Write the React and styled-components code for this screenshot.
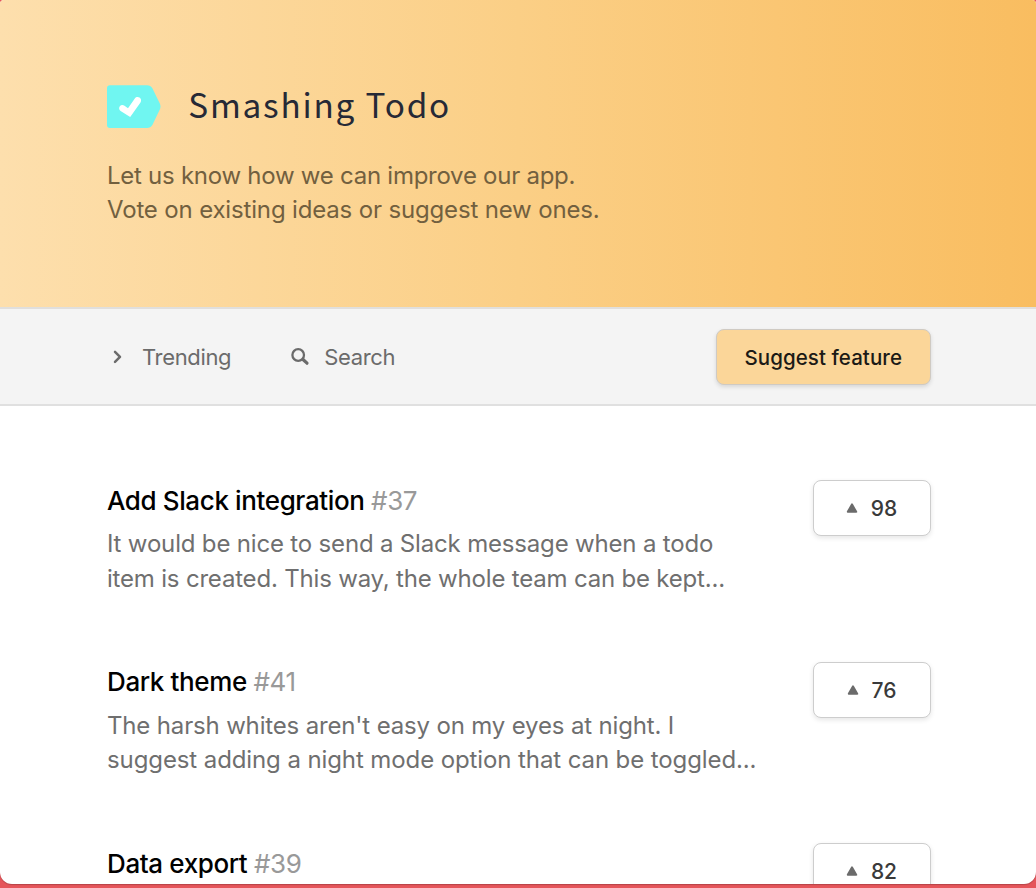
import React from 'react';
import styled, { createGlobalStyle } from 'styled-components';

const Global = createGlobalStyle`
  * { box-sizing: border-box; }
  body { margin: 0; background: #e5555a; font-family: Inter, "Liberation Sans", sans-serif; -webkit-font-smoothing: antialiased; }
  h1, h2, p { margin: 0; font-weight: 400; }
  button { font-family: inherit; margin: 0; padding: 0; }
`;

const Page = styled.div`
  height: 888px;
  overflow: hidden;
  background: #e5555a;
`;
const Card = styled.main`
  height: 884px;
  overflow: hidden;
  border-radius: 4px 4px 12px 12px;
  background: #fff;
  box-shadow: 0 1px 1px rgba(0, 0, 0, 0.2);
`;
const Hero = styled.header`
  height: 307px;
  padding: 85px 107px 0;
  background: linear-gradient(90deg, #fddfad 0%, #fbcf86 50%, #f9bd60 100%);
`;
const Brand = styled.div`
  display: flex;
  align-items: center;
  height: 43px;
  gap: 27.3px;
`;
const Logo = styled.svg`
  display: block;
  flex: none;
`;
const Wordmark = styled.h1`
  height: 43px;
  font-family: "Noto Sans CJK SC", "Noto Sans", sans-serif;
  font-size: 33.3px;
  line-height: 37px;
  letter-spacing: 1.8px;
  color: #262936;
  white-space: nowrap;
`;
const Intro = styled.p`
  margin-top: 31px;
  font-size: 24px;
  line-height: 34.4px;
  color: #72603f;
  white-space: nowrap;
`;
const Line = styled.span`
  display: block;
  letter-spacing: ${(p) => p.$track || '0'};
`;
const Toolbar = styled.nav`
  display: flex;
  align-items: center;
  height: 99px;
  padding: 0 105.5px 0 107px;
  background: #f4f4f4;
  border-top: 2px solid #e0dfdd;
  border-bottom: 2px solid #e0e0e0;
`;
const Tool = styled.button`
  display: flex;
  align-items: center;
  gap: ${(p) => p.$gap};
  margin-right: ${(p) => p.$after || '0'};
  border: 0;
  background: none;
  color: #6b6b6b;
  font-size: 22px;
  line-height: 30px;
  letter-spacing: -0.35px;
`;
const Glyph = styled.svg`
  display: block;
  flex: none;
`;
const Suggest = styled.button`
  width: 214.5px;
  height: 56px;
  margin-left: auto;
  padding-top: 1px;
  border: 1px solid #cfcac3;
  border-radius: 8px;
  background: #fbd699;
  box-shadow: 0 2px 4px rgba(0, 0, 0, 0.12);
  color: #1c1a16;
  font-size: 20.5px;
  font-weight: 500;
  letter-spacing: 0.07px;
`;
const Ideas = styled.section`
  display: flex;
  flex-direction: column;
  padding: 74px 105.5px 0 107px;
`;
const Idea = styled.article`
  display: flex;
  justify-content: space-between;
  align-items: flex-start;
  height: 181.5px;
`;
const Title = styled.h2`
  margin-top: 2.9px;
  font-size: 26px;
  line-height: 36px;
  font-weight: 500;
  letter-spacing: -0.38px;
  color: #000;
  white-space: nowrap;
`;
const Ref = styled.span`
  font-weight: 400;
  color: #999;
`;
const Summary = styled.p`
  margin-top: 8.2px;
  font-size: 24px;
  line-height: 34.5px;
  color: #6f6f6f;
  white-space: nowrap;
`;
const Vote = styled.button`
  display: flex;
  align-items: center;
  justify-content: center;
  gap: 13px;
  width: 118px;
  height: 56px;
  border: 1px solid #cdcdcd;
  border-radius: 8px;
  background: #fff;
  box-shadow: 0 2px 5px rgba(0, 0, 0, 0.1);
  color: #3a3a3a;
  font-size: 21px;
  line-height: 26px;
  font-weight: 500;
`;
const Count = styled.span`
  padding-top: 2px;
`;

const ideas = [
  {
    id: 37, title: 'Add Slack integration', votes: 98,
    lines: [
      ['It would be nice to send a Slack message when a todo', '-0.175px'],
      ['item is created. This way, the whole team can be kept...', '-0.19px'],
    ],
  },
  {
    id: 41, title: 'Dark theme', votes: 76,
    lines: [
      ["The harsh whites aren't easy on my eyes at night. I", '-0.16px'],
      ['suggest adding a night mode option that can be toggled...', '-0.1px'],
    ],
  },
  { id: 39, title: 'Data export', votes: 82, lines: [] },
];

export default function App() {
  return (
    <Page>
      <Global />
      <Card>
        <Hero>
          <Brand>
            <Logo width="54" height="43" viewBox="0 0 54 43">
              <path d="M3 0.300H40Q43.500 0.300 45.500 3.500L52.800 18.500Q54.200 21.500 52.800 24.500L45.500 39.700Q43.500 43 40 43H3Q0 43 0 40V3.300Q0 0.300 3 0.300Z" fill="#70f6f1" />
              <path d="M12.800 21.300C14 19.800 16 19.700 17.500 20.800L21 23.300L27.800 13.500C29 11.800 31 11.600 32.500 12.600C34.200 13.700 34.600 15.700 33.500 17.400L23.200 32L13.600 26C12 24.900 11.700 22.900 12.800 21.300Z" fill="#fff" />
            </Logo>
            <Wordmark>Smashing Todo</Wordmark>
          </Brand>
          <Intro>
            <Line $track="-0.26px">Let us know how we can improve our app.</Line>
            <Line $track="-0.16px">Vote on existing ideas or suggest new ones.</Line>
          </Intro>
        </Hero>
        <Toolbar>
          <Tool $gap="17px" $after="60px">
            <Glyph width="18" height="18" viewBox="0 0 18 18">
              <path d="M8 3.800L13 8.800L8 13.800" fill="none" stroke="#6b6b6b" strokeWidth="2.500" strokeLinecap="round" strokeLinejoin="round" />
            </Glyph>
            Trending
          </Tool>
          <Tool $gap="14px">
            <Glyph width="19" height="18" viewBox="0 0 19 18">
              <circle cx="7.200" cy="7" r="5.800" fill="none" stroke="#6b6b6b" strokeWidth="2.300" />
              <path d="M12 11.500L16 15.200" stroke="#6b6b6b" strokeWidth="3.200" strokeLinecap="round" />
            </Glyph>
            Search
          </Tool>
          <Suggest>Suggest feature</Suggest>
        </Toolbar>
        <Ideas>
          {ideas.map((idea) => (
            <Idea key={idea.id}>
              <div>
                <Title>{idea.title} <Ref>#{idea.id}</Ref></Title>
                <Summary>
                  {idea.lines.map(([text, track]) => <Line key={text} $track={track}>{text}</Line>)}
                </Summary>
              </div>
              <Vote>
                <Glyph width="12" height="10" viewBox="0 0 12 10">
                  <path d="M6 1.200L10.300 8.800H1.700Z" fill="#6b6b6b" stroke="#6b6b6b" strokeWidth="1.800" strokeLinejoin="round" />
                </Glyph>
                <Count>{idea.votes}</Count>
              </Vote>
            </Idea>
          ))}
        </Ideas>
      </Card>
    </Page>
  );
}
